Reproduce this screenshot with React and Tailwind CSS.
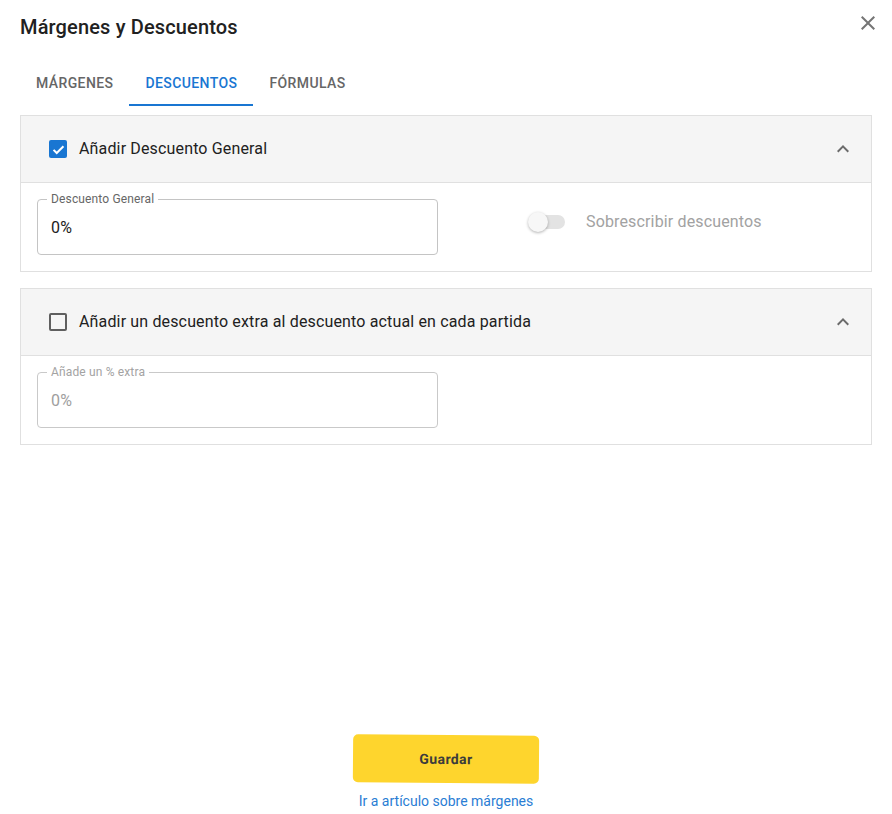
import React from "react";

const font = { fontFamily: "Roboto, 'Noto Sans', sans-serif" };

function CloseIcon() {
  return (
    <svg viewBox="0 0 24 24" className="w-6 h-6 fill-[#757575]">
      <path d="M19 6.41 17.59 5 12 10.59 6.41 5 5 6.41 10.59 12 5 17.59 6.41 19 12 13.41 17.59 19 19 17.59 13.41 12z" />
    </svg>
  );
}

function ExpandLess() {
  return (
    <svg viewBox="0 0 24 24" className="w-6 h-6 fill-[#6b6b6b]">
      <path d="M12 8l-6 6 1.41 1.41L12 10.83l4.59 4.58L18 14z" />
    </svg>
  );
}

function Checkbox({ checked }) {
  if (checked) {
    return (
      <span className="w-[18px] h-[18px] rounded-[2px] bg-[#1976d2] flex items-center justify-center shrink-0">
        <svg viewBox="0 0 24 24" className="w-[17px] h-[17px]">
          <path d="M5 12.5l4.5 4.5L19 7.5" fill="none" stroke="white" strokeWidth="2.8" />
        </svg>
      </span>
    );
  }
  return <span className="w-[18px] h-[18px] rounded-[2px] border-2 border-[#5f5f5f] shrink-0" />;
}

function OutlinedField({ label, value, disabled }) {
  return (
    <div
      className={`relative w-[401px] h-[56px] rounded-[4px] border flex items-center px-[13px] pt-[1px] ${
        disabled ? "border-[#c9c9c9]" : "border-[#c4c4c4]"
      }`}
    >
      <span
        className={`absolute left-[9px] -top-[9px] bg-white px-[4px] text-[12px] leading-4 tracking-[0.15px] ${
          disabled ? "text-[#a3a3a3]" : "text-[#666666]"
        }`}
      >
        {label}
      </span>
      <span
        className={`text-[16px] leading-6 tracking-[0.15px] ${disabled ? "text-[#9e9e9e]" : "text-[#212121]"}`}
      >
        {value}
      </span>
    </div>
  );
}

function Section({ checked, title, children }) {
  return (
    <div className="mx-5 border border-[#e0e0e0] bg-white">
      <div className="h-[67px] bg-[#f5f5f5] border-b border-[#e0e0e0] flex items-center pl-[28px] pr-4">
        <Checkbox checked={checked} />
        <span className="ml-3 text-[16px] text-[#212121] leading-6 tracking-[0.15px]">{title}</span>
        <span className="ml-auto">
          <ExpandLess />
        </span>
      </div>
      <div className="px-4 py-4 flex items-center">{children}</div>
    </div>
  );
}

export default function App() {
  return (
    <div className="w-[892px] h-[814px] bg-white flex flex-col" style={font}>
      <div className="flex items-start justify-between pl-5 pr-3">
        <h2 className="pt-[11px] text-[20px] leading-8 font-medium tracking-[0.15px] text-[#212121]">
          Márgenes y Descuentos
        </h2>
        <button className="mt-[11px]">
          <CloseIcon />
        </button>
      </div>

      <div className="mt-4 px-5 flex h-12">
        <div className="px-4 flex items-center text-[14px] font-medium tracking-[0.4px] text-[#666666]">MÁRGENES</div>
        <div className="relative px-4 flex items-center text-[14px] font-medium tracking-[0.4px] text-[#1976d2]">
          DESCUENTOS
          <span className="absolute left-0 right-0 bottom-[1px] h-[2px] bg-[#1976d2]" />
        </div>
        <div className="px-4 flex items-center text-[14px] font-medium tracking-[0.4px] text-[#666666]">FÓRMULAS</div>
      </div>

      <div className="mt-2">
        <Section checked title="Añadir Descuento General">
          <OutlinedField label="Descuento General" value="0%" />
          <div className="ml-[90px] mb-[10px] flex items-center">
            <div className="relative w-[38px] h-5">
              <span className="absolute left-[3px] top-[3px] w-[34px] h-[14px] rounded-full bg-[#e3e3e3]" />
              <span className="absolute left-0 top-0 w-5 h-5 rounded-full bg-[#f7f7f7] shadow-[0_1px_3px_rgba(0,0,0,0.3)]" />
            </div>
            <span className="ml-5 text-[16px] tracking-[0.15px] text-[#a2a2a2]">Sobrescribir descuentos</span>
          </div>
        </Section>
      </div>

      <div className="mt-4">
        <Section checked={false} title="Añadir un descuento extra al descuento actual en cada partida">
          <OutlinedField label="Añade un % extra" value="0%" disabled />
        </Section>
      </div>

      <div className="flex-1" />

      <div className="flex flex-col items-center pb-[3px]">
        <button className="w-[186px] h-[48px] rounded-[5px] bg-[#fed52d] rotate-[0.45deg] text-[14px] font-bold tracking-[0.4px] text-[#3c3c3c]">
          Guardar
        </button>
        <a className="mt-2 text-[14px] leading-5 text-[#2a7dd4]">Ir a artículo sobre márgenes</a>
      </div>
    </div>
  );
}
